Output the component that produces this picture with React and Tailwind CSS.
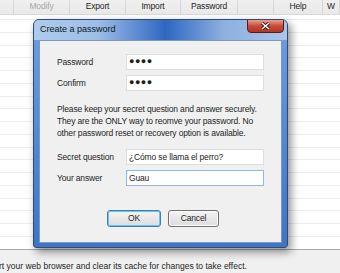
const rows = Array.from({ length: 18 });

function Field({ label, children, mb = true }) {
    return (
        <div className={`flex items-center h-[16px] ${mb ? "mb-[5px]" : ""}`}>
            <span className="w-[69px] shrink-0 text-[#1e1e1e]">{label}</span>
            {children}
        </div>
    );
}

export default function App() {
    const toolbar = [
        { w: 14, label: "" },
        { w: 56, label: "Modify", off: true },
        { w: 56, label: "Export" },
        { w: 55, label: "Import" },
        { w: 57, label: "Password" },
        { w: 36, label: "" },
        { w: 49, label: "Help" },
        { w: 17, label: "W" },
    ];

    return (
        <div
            className="relative w-[340px] h-[273px] overflow-hidden bg-white flex flex-col text-[8.5px] tracking-[-0.15px]"
            style={{ fontFamily: '"Liberation Sans", Arial, sans-serif' }}
        >
            {/* toolbar */}
            <div className="flex h-[15px] shrink-0 bg-gradient-to-b from-[#f0f0f0] to-[#e9e9e9] border-b border-[#d9d9d9]">
                {toolbar.map((t, i) => (
                    <div
                        key={i}
                        style={{ width: t.w }}
                        className={`shrink-0 border-r border-[#d7d7d7] flex justify-center pt-[1px] leading-[10px] ${t.off ? "text-[#a7a7a7]" : "text-[#1e1e1e]"}`}
                    >
                        {t.label}
                    </div>
                ))}
            </div>

            {/* list */}
            <div className="flex-1 flex flex-col overflow-hidden">
                <div className="h-[5px] shrink-0 border-b border-[#ececec]" />
                {rows.map((_, i) => (
                    <div key={i} className="h-[12.78px] shrink-0 border-b border-[#ececec]" />
                ))}
            </div>

            {/* status bar */}
            <div className="h-[24px] shrink-0 bg-[#f0f0f0] border-t border-[#a9a9a9] pt-[11px] -ml-[1px] text-[#1e1e1e] whitespace-nowrap leading-[10px] tracking-normal">
                rt your web browser and clear its cache for changes to take effect.
            </div>

            {/* dialog window */}
            <div className="absolute left-[33px] top-[19px] w-[255px] h-[229px] rounded-t-[6px] rounded-b-[3px] border border-[#2f4a74] shadow-[3px_4px_8px_rgba(0,0,0,0.45)] bg-[linear-gradient(180deg,#6f9fe0_0%,#4f84d2_60%,#3f74c6_100%)] flex flex-col overflow-hidden">
                <div className="h-[20px] shrink-0 relative bg-[linear-gradient(90deg,#aecbec_0%,#9dbee8_25%,#2f67c0_52%,#8db0e0_75%,#a8c6ec_100%)] flex items-center pl-[6px]">
                    <span className="text-[9px] text-[#101820] tracking-normal">Create a password</span>
                    <div className="absolute right-[3px] top-[-1px] w-[37px] h-[14px] rounded-b-[4px] border border-[#5a1a1a] bg-gradient-to-b from-[#e8a090] via-[#c64a3a] to-[#b33525] flex items-center justify-center">
                        <svg width="9" height="8" viewBox="0 0 9 8">
                            <path d="M1 1 L8 7 M8 1 L1 7" stroke="#3a0a0a" strokeWidth="3" />
                            <path d="M1 1 L8 7 M8 1 L1 7" stroke="#ffffff" strokeWidth="1.6" />
                        </svg>
                    </div>
                </div>
                <div className="flex-1 mx-[5px] mb-[4px] border border-[#7e98bd] bg-[#f0f0f0] pt-[13px] px-[17px] text-[#1e1e1e]">
                    <Field label="Password">
                        <div className="w-[138px] h-[16px] bg-white border border-[#dadde2] flex items-center pl-[2px] text-[9px] font-bold tracking-[0.5px]">●●●●</div>
                    </Field>
                    <Field label="Confirm">
                        <div className="w-[138px] h-[16px] bg-white border border-[#dadde2] flex items-center pl-[2px] text-[9px] font-bold tracking-[0.5px]">●●●●</div>
                    </Field>
                    <p className="mt-[12px] leading-[12px]">
                        Please keep your secret question and answer securely.
                        <br />
                        They are the ONLY way to reomve your password. No
                        <br />
                        other password reset or recovery option is available.
                    </p>
                    <div className="mt-[10px]">
                        <Field label="Secret question">
                            <div className="w-[138px] h-[16px] bg-white border border-[#dadde2] flex items-center pl-[2px]">¿Cómo se llama el perro?</div>
                        </Field>
                        <Field label="Your answer" mb={false}>
                            <div className="w-[138px] h-[16px] bg-white border border-[#8fb8e0] flex items-center pl-[2px]">Guau</div>
                        </Field>
                    </div>
                    <div className="flex gap-[7px] ml-[50px] mt-[24px]">
                        <div className="w-[54px] h-[17px] rounded-[3px] border border-[#3c7fb1] shadow-[inset_0_0_0_1px_#6ec2ee] bg-gradient-to-b from-[#f4f4f4] to-[#dcdcdc] flex items-center justify-center">OK</div>
                        <div className="w-[51px] h-[17px] rounded-[3px] border border-[#707070] shadow-[inset_0_0_0_1px_#fcfcfc] bg-gradient-to-b from-[#f4f4f4] to-[#dcdcdc] flex items-center justify-center">Cancel</div>
                    </div>
                </div>
            </div>
        </div>
    );
}
